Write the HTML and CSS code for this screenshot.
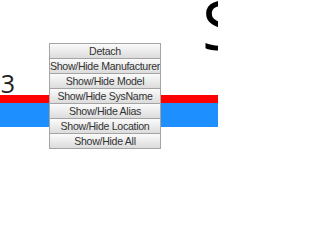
FILE: index.html
```html
<!DOCTYPE html>
<html>
<head>
<meta charset="utf-8">
<link rel="stylesheet" href="styles.css">
</head>
<body>
<div class="canvas">
  <div class="band-red"></div>
  <div class="band-blue"></div>
  <div class="node-label">53</div>
  <div class="node-title">S</div>
  <div class="menu">
    <button class="item">Detach</button>
    <button class="item">Show/Hide Manufacturer</button>
    <button class="item">Show/Hide Model</button>
    <button class="item">Show/Hide SysName</button>
    <button class="item">Show/Hide Alias</button>
    <button class="item">Show/Hide Location</button>
    <button class="item">Show/Hide All</button>
  </div>
</div>
</body>
</html>
```
FILE: styles.css
```css
html, body {
  margin: 0;
  padding: 0;
  background: #ffffff;
}
.canvas {
  position: relative;
  width: 218px;
  height: 207px;
  overflow: hidden;
  padding-top: 95px;
  box-sizing: border-box;
}
.band-red {
  height: 8px;
  background: #ff0000;
}
.band-blue {
  height: 24px;
  background: #1e8fff;
}
.node-label {
  position: absolute;
  right: 203px;
  top: 66px;
  font-family: "Open Sans", sans-serif;
  font-size: 25px;
  line-height: 34px;
  color: #222;
}
.node-title {
  position: absolute;
  left: 202px;
  top: -21px;
  font-family: "Open Sans", sans-serif;
  font-weight: 400;
  font-size: 68px;
  line-height: 90px;
  color: #000;
}
.menu {
  position: absolute;
  left: 49px;
  top: 43px;
  width: 112px;
  display: flex;
  flex-direction: column;
}
.item {
  display: block;
  height: 16px;
  margin: 0;
  margin-top: -1px;
  padding: 0;
  border: 1px solid #a4a4a4;
  background: linear-gradient(#fbfbfb, #dcdcdc);
  font-family: "Liberation Sans", Arial, sans-serif;
  font-size: 10.6px;
  letter-spacing: -0.3px;
  line-height: 14px;
  color: #333;
  text-align: center;
  white-space: nowrap;
  overflow: hidden;
}
.item:first-child {
  margin-top: 0;
}
```
